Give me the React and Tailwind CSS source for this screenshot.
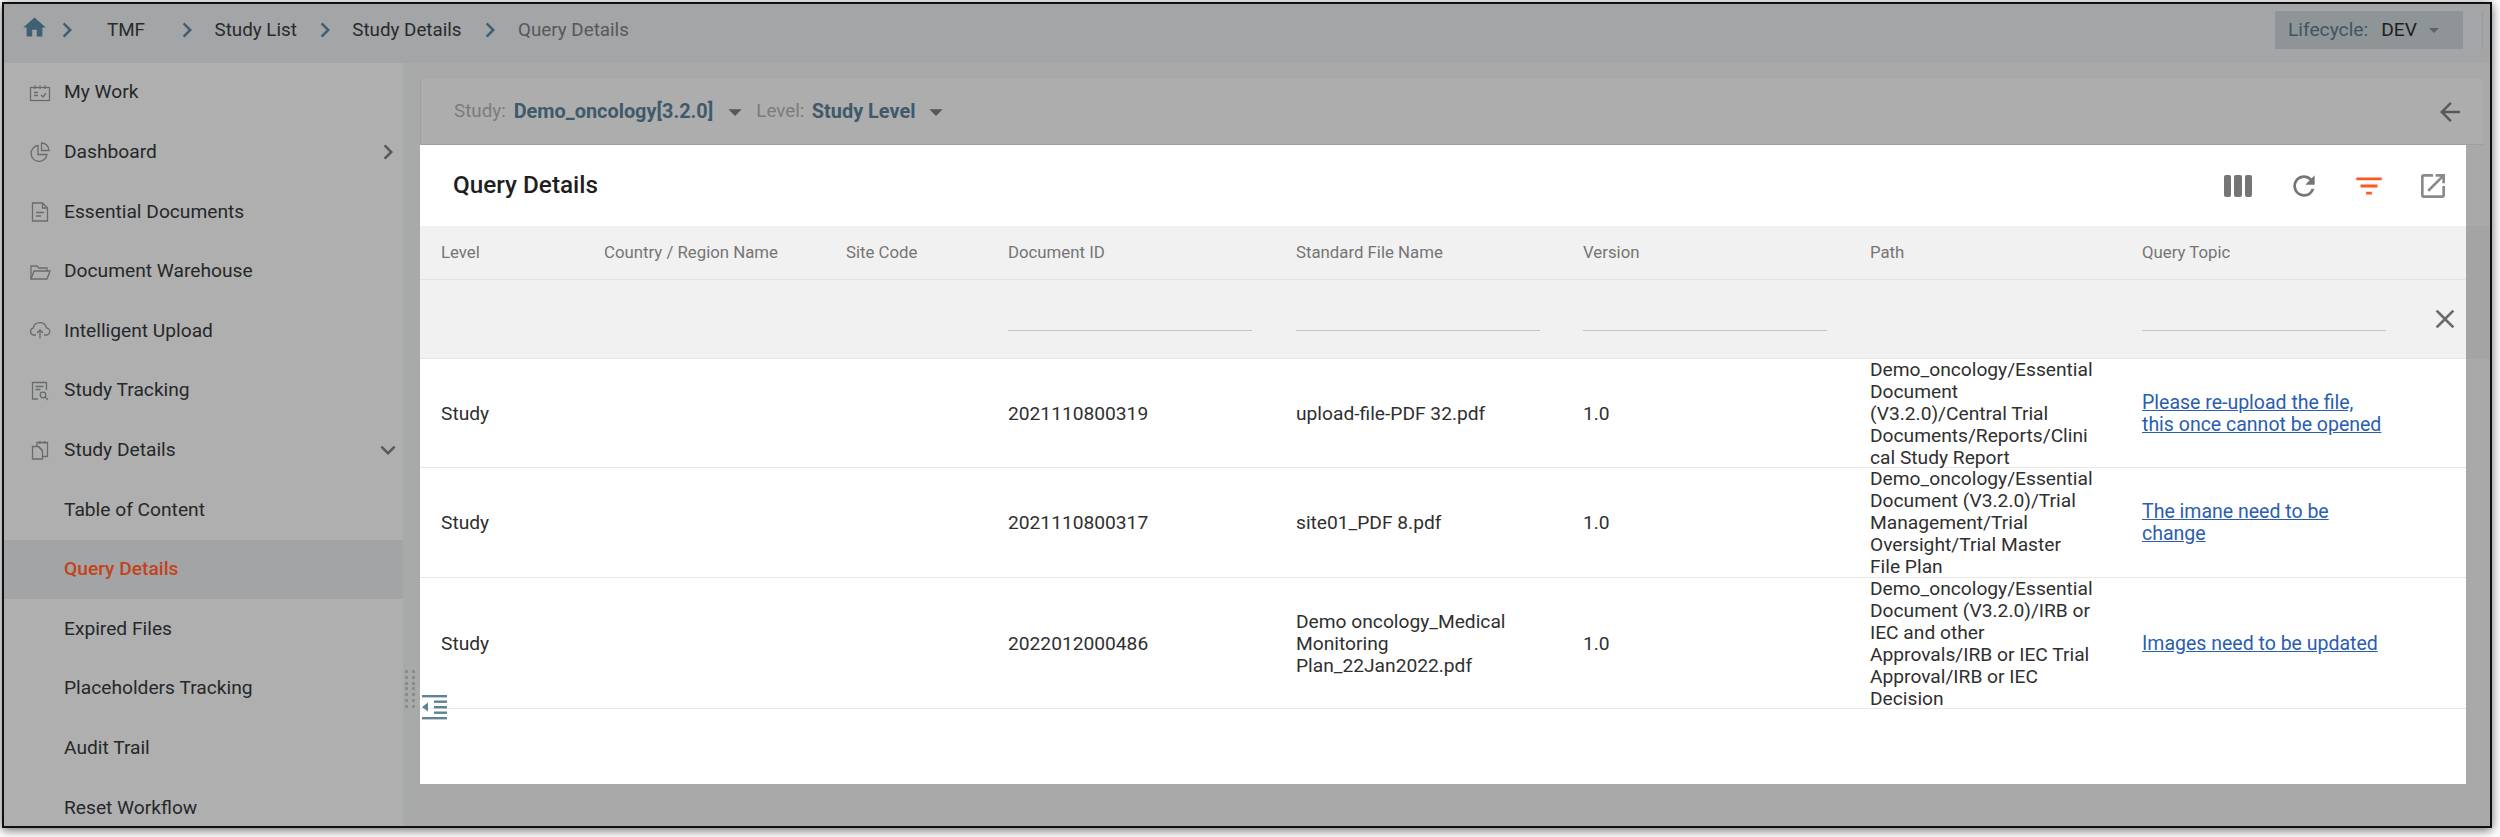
import React from "react";
import { MdHome, MdChevronRight, MdRefresh, MdFilterList, MdOpenInNew, MdArrowBack, MdClose, MdArrowDropDown, MdExpandMore } from "react-icons/md";

const ic = { width: 24, height: 24, viewBox: "0 0 24 24", fill: "none", stroke: "#696c6d", strokeWidth: 1.3 };
const icons = {
  work: <svg {...ic}><rect x="2.5" y="6.5" width="19" height="13" /><path d="M7 4.5v3.5M12 4.5v3.5M17 4.5v3.5M6 11.5h4M6 14.5h4M13 14l2 2 3-4" /></svg>,
  dash: <svg {...ic}><path d="M10 5.5a8 8 0 1 0 9 9h-9z" /><path d="M13.5 3v7.5h7.5A7.5 7.5 0 0 0 13.5 3z" /></svg>,
  doc: <svg {...ic}><path d="M4.5 3h10l5 5v13h-15z" /><path d="M14.5 3v5h5M8 12.5h8M8 16h5" /></svg>,
  folder: <svg {...ic}><path d="M3 19V6h6l2 2h8v3" /><path d="M3 19l3-8h16l-3 8z" /></svg>,
  upload: <svg {...ic}><path d="M8 16H6a3.5 3.5 0 0 1-.8-6.9A6.8 6.8 0 0 1 18.5 9a3.5 3.5 0 0 1-.5 7h-2" /><path d="M12 19.5v-8M9 14l3-3 3 3" /></svg>,
  track: <svg {...ic}><path d="M10 20H4.5V3.5h14V11" /><path d="M7.5 7.5h8M7.5 10.5h5" /><circle cx="15" cy="16" r="2.8" /><path d="M17 18l3 3" /></svg>,
  details: <svg {...ic}><path d="M4.5 8.5h6l4 4V21h-10z" /><path d="M9 8.5v-4h10.5v14h-5M10.5 8.5l3.5 4M12 3v3M16.5 3v3" /></svg>,
};

const nav = [
  ["My Work", "work"], ["Dashboard", "dash", "right"], ["Essential Documents", "doc"], ["Document Warehouse", "folder"],
  ["Intelligent Upload", "upload"], ["Study Tracking", "track"], ["Study Details", "details", "down"], ["Table of Content"],
  ["Query Details", null, null, true], ["Expired Files"], ["Placeholders Tracking"], ["Audit Trail"], ["Reset Workflow"],
];

const GRID = "grid grid-cols-[163px_242px_162px_288px_287px_287px_272px_1fr]";

const rows = [
  { id: "2021110800319", file: "upload-file-PDF 32.pdf", path: ["Demo_oncology/Essential", "Document", "(V3.2.0)/Central Trial", "Documents/Reports/Clini", "cal Study Report"], topic: ["Please re-upload the file,", "this once cannot be opened"], h: "h-[109px]" },
  { id: "2021110800317", file: "site01_PDF 8.pdf", path: ["Demo_oncology/Essential", "Document (V3.2.0)/Trial", "Management/Trial", "Oversight/Trial Master", "File Plan"], topic: ["The imane need to be", "change"], h: "h-[110px]" },
  { id: "2022012000486", file: "Demo oncology_Medical Monitoring Plan_22Jan2022.pdf", path: ["Demo_oncology/Essential", "Document (V3.2.0)/IRB or", "IEC and other", "Approvals/IRB or IEC Trial", "Approval/IRB or IEC", "Decision"], topic: ["Images need to be updated"], h: "h-[131px]" },
];

const Lines = ({ items }) => items.map((t, i) => <React.Fragment key={i}>{i > 0 && <br />}{t}</React.Fragment>);

const Sep = ({ cls }) => <MdChevronRight size={30} className={"text-[#3f5f73] shrink-0 " + cls} />;

export default function App() {
  return (
    <div className="w-[2500px] h-[837px] bg-white overflow-hidden [font-family:Roboto,sans-serif]">
      <div className="ml-[2px] mt-[2px] w-[2490px] h-[826px] border-2 border-[#111] shadow-[0_2px_10px_rgba(0,0,0,0.6)] flex flex-col overflow-hidden bg-[#a9a9a9] text-[19.2px]">
        <header className="h-[59px] shrink-0 bg-[#a3a5a6] flex items-center pb-[7px] text-[#262b2e] text-[18.8px]">
          <MdHome size={27} className="text-[#3f5f73] ml-[16.5px] mt-[-6px] shrink-0" />
          <Sep cls="ml-[4px]" />
          <span className="ml-[25.5px]">TMF</span>
          <Sep cls="ml-[27px]" />
          <span className="ml-[12.5px]">Study List</span>
          <Sep cls="ml-[13px]" />
          <span className="ml-[12.5px]">Study Details</span>
          <Sep cls="ml-[13.5px]" />
          <span className="ml-[13px] text-[#54595c]">Query Details</span>
          <div className="ml-auto w-[188px] h-[38px] bg-[#8f9597] flex items-center pl-[13px] text-[19.2px]">
            <span className="text-[#3d5564]">Lifecycle:</span>
            <span className="ml-[13px] text-[#1c1f21]">DEV</span>
            <MdArrowDropDown size={24} className="ml-[5px] text-[#5f6466]" />
          </div>
          <span className="ml-[19px] mr-[7px] w-[1px] h-[38px] bg-[#989b9c]" />
        </header>
        <div className="flex flex-1 min-h-0">
          <aside className="w-[399px] shrink-0 bg-[#afafaf] overflow-hidden">
            {nav.map(([label, icon, chev, active]) => (
              <div key={label} className={"h-[59.6px] flex items-center pl-[60px] pr-[6px] relative " + (active ? "bg-[#a2a4a5] text-[#c4421a] font-medium" : "text-[#25282a]")}>
                {icon && <span className="absolute left-[24px] top-1/2 -translate-y-1/2 flex">{icons[icon]}</span>}
                {label}
                {chev === "right" && <MdChevronRight size={30} className="ml-auto text-[#55595b] mr-[-6px]" />}
                {chev === "down" && <MdExpandMore size={30} className="ml-auto text-[#55595b] mr-[-6px]" />}
              </div>
            ))}
          </aside>
          <div className="w-[17px] shrink-0 relative bg-[#a8aaaa]">
            <div className="absolute left-[2px] top-[607px] grid grid-cols-2 gap-x-[3.5px] gap-y-[2.8px]">
              {Array.from({ length: 14 }).map((_, i) => <span key={i} className="w-[3px] h-[3px] bg-[#8a8d8e]" />)}
            </div>
          </div>
          <main className="flex-1 min-w-0 flex flex-col">
            <div className="mt-[16px] h-[66px] w-[2063px] shrink-0 bg-[#adadad] border-b border-[#a0a0a0] border-l flex items-center pl-[33px] text-[18.8px]">
              <span className="text-[#7a7c7d]">Study:</span>
              <span className="ml-[8px] text-[#3f5a6b] font-bold text-[19.9px]">Demo_oncology[3.2.0]</span>
              <MdArrowDropDown size={32} className="ml-[6px] text-[#555859]" />
              <span className="ml-[5px] text-[#7a7c7d]">Level:</span>
              <span className="ml-[7.5px] text-[#3f5a6b] font-bold text-[19.9px]">Study Level</span>
              <MdArrowDropDown size={32} className="ml-[5px] text-[#555859]" />
              <MdArrowBack size={30} className="ml-auto mr-[18px] text-[#565a5c]" />
            </div>
            <div className="flex items-start">
              <section className="w-[2046px] h-[639px] shrink-0 bg-white relative">
                <div className="h-[81px] flex items-center pl-[33px]">
                  <h1 className="text-[24.3px] font-medium text-[#1f1f1f]">Query Details</h1>
                  <div className="ml-auto flex items-center">
                    <svg width="28" height="22" viewBox="0 0 28 22" className="mr-[36px]" fill="#757575"><rect x="0" y="0" width="7" height="22" rx="2" /><rect x="10" y="0" width="8" height="22" rx="2" /><rect x="21" y="0" width="7" height="22" rx="2" /></svg>
                    <MdRefresh size={32} className="text-[#757575] mr-[31.5px]" />
                    <MdFilterList size={34} className="text-[#ff5722] mr-[31.5px]" />
                    <MdOpenInNew size={32} className="text-[#8a8a8a] mr-[17px]" />
                  </div>
                </div>
                <div className={GRID + " h-[54px] bg-[#f1f1f1] border-b border-[#e4e4e4] items-center pl-[21px] text-[#757575] text-[16.8px]"}>
                  <span>Level</span><span>Country / Region Name</span><span>Site Code</span><span>Document ID</span>
                  <span>Standard File Name</span><span>Version</span><span>Path</span><span>Query Topic</span>
                </div>
                <div className={GRID + " h-[79px] bg-[#f1f1f1] border-b border-[#e4e4e4] pl-[21px] relative"}>
                  <span /><span /><span />
                  {[0, 1, 2].map((i) => <span key={i} className="w-[244px] h-[51px] border-b border-[#c4c4c4]" />)}
                  <span />
                  <span className="w-[244px] h-[51px] border-b border-[#c4c4c4]" />
                  <MdClose size={32} className="absolute right-[5.5px] top-[23px] text-[#6b6b6b]" />
                </div>
                {rows.map((r) => (
                  <div key={r.id} className={GRID + " " + r.h + " border-b border-[#e8e8e8] items-center pl-[21px] pb-[2px] text-[#2f2f2f] leading-[22px]"}>
                    <span>Study</span><span /><span />
                    <span>{r.id}</span>
                    <span className="pr-[43px]">{r.file}</span>
                    <span>1.0</span>
                    <span className="whitespace-nowrap"><Lines items={r.path} /></span>
                    <a className="text-[#2a5db0] underline whitespace-nowrap text-[19.5px]"><Lines items={r.topic} /></a>
                  </div>
                ))}
                <svg width="26" height="26" viewBox="0 0 26 26" className="absolute left-[2px] top-[550px]" fill="#5f8296">
                  <rect x="0" y="0" width="25" height="2.4" /><rect x="12" y="5.5" width="13" height="2.4" /><rect x="12" y="11" width="13" height="2.4" /><rect x="12" y="16.5" width="13" height="2.4" /><rect x="0" y="22" width="25" height="2.4" /><path d="M6 7.5v9L0 12z" />
                </svg>
              </section>
              <div className="flex-1 flex flex-col">
                <div className="h-[81px]" />
                <div className="h-[133px] bg-[#a4a4a4]" />
              </div>
            </div>
          </main>
        </div>
      </div>
    </div>
  );
}
